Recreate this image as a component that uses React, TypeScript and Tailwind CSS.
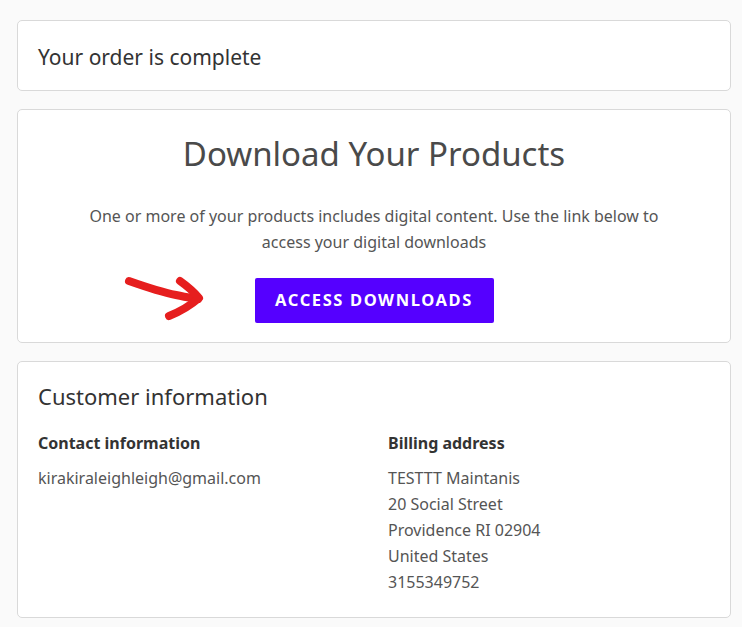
export default function App() {
  return (
    <div className="min-h-screen bg-[#fafafa] px-[17px] pt-[20px] pb-4 text-[#333] [font-family:'Noto_Sans','Open_Sans',sans-serif]">
      <div className="flex w-[714px] flex-col gap-[18px]">
        {/* Order status */}
        <div className="flex h-[71px] items-center rounded-[5px] border border-[#d9d9d9] bg-white px-[20px] pt-[3px]">
          <h2 className="text-[21px] leading-none text-[#333]">Your order is complete</h2>
        </div>

        {/* Downloads */}
        <div className="relative flex h-[234px] flex-col items-center rounded-[5px] border border-[#d9d9d9] bg-white pt-[24px]">
          <h1 className="text-[33px] leading-[40px] text-[#4a4a4a]">Download Your Products</h1>
          <p className="mt-[29px] max-w-[600px] text-center text-[16px] leading-[26px] text-[#555]">
            One or more of your products includes digital content. Use the link below to access your digital downloads
          </p>
          <button className="mt-[23px] h-[45px] w-[239px] rounded-[2px] bg-[#5500ff] text-[16.5px] font-bold tracking-[1.6px] text-white">
            ACCESS DOWNLOADS
          </button>
          <svg
            className="absolute left-[103px] top-[160px]"
            width="90"
            height="55"
            viewBox="0 0 90 55"
            fill="none"
            stroke="#e61e1e"
            strokeWidth="8"
            strokeLinecap="round"
            strokeLinejoin="round"
          >
            <path d="M8 11 C 25 17, 40 22, 55 25 C 64 27, 71 28, 77 29" />
            <path d="M59 11 C 66 16, 73 22, 78 28 C 70 35, 58 42, 48 46" />
          </svg>
        </div>

        {/* Customer info */}
        <div className="rounded-[5px] border border-[#d9d9d9] bg-white px-[20px] pt-[20px] pb-[22px]">
          <h2 className="text-[22px] leading-[28px] text-[#333]">Customer information</h2>
          <div className="mt-[20px] grid grid-cols-2">
            <div>
              <h3 className="text-[16px] font-bold leading-[26px] text-[#333]">Contact information</h3>
              <div className="mt-[9px] text-[16px] leading-[26px] text-[#555]">kirakiraleighleigh@gmail.com</div>
            </div>
            <div className="pl-[14px]">
              <h3 className="text-[16px] font-bold leading-[26px] text-[#333]">Billing address</h3>
              <div className="mt-[9px] text-[16px] leading-[26px] text-[#555]">
                <div>TESTTT Maintanis</div>
                <div>20 Social Street</div>
                <div>Providence RI 02904</div>
                <div>United States</div>
                <div>3155349752</div>
              </div>
            </div>
          </div>
        </div>
      </div>
    </div>
  );
}
